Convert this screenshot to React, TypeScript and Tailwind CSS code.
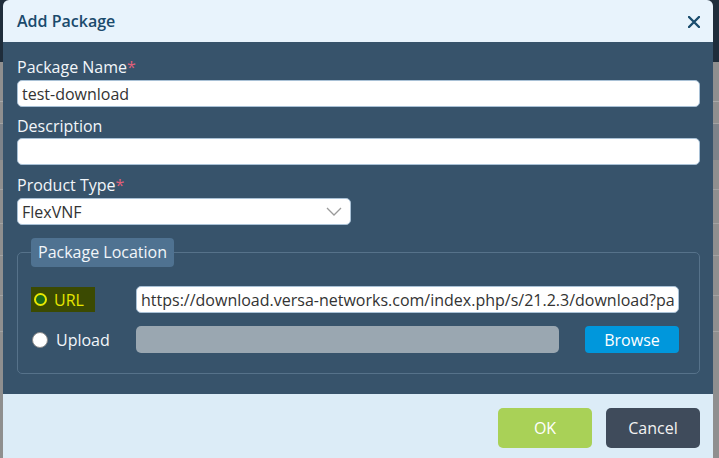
import React from "react";

const fieldBox =
  "h-[27px] w-full rounded-[5px] border border-[#a9c1d6] bg-white px-[4px] text-[16px] text-[#333] outline-none";

function Label({ text, required }: { text: string; required?: boolean }) {
  return (
    <div className="h-[20px] text-[16px] leading-[20px] text-[#f2f6fa]">
      {text}
      {required && <span className="text-[#e0607a]">*</span>}
    </div>
  );
}

function Backdrop() {
  return (
    <div className="flex h-full w-full flex-col">
      <div className="h-[62px] bg-[#1f2d3b]" />
      <div className="flex flex-1 flex-col bg-[#8f8f8f]">
        <div className="h-[40px] border-b border-[#a9a9a9]" />
        <div className="h-[22px] border-b border-[#a3a3a3]" />
        <div className="h-[36px] bg-[#7d838a]" />
        <div className="h-[30px] border-b border-[#a3a3a3]" />
        <div className="h-[34px] border-b border-[#a3a3a3]" />
        <div className="h-[32px] border-b border-[#a3a3a3]" />
        <div className="h-[40px] border-b border-[#a3a3a3]" />
        <div className="h-[36px] border-b border-[#a3a3a3]" />
      </div>
    </div>
  );
}

export default function App() {
  return (
    <div className="relative h-[458px] w-[719px] overflow-hidden font-['Open_Sans',sans-serif]">
      <Backdrop />

      <div className="absolute left-[3px] top-0 flex h-[458px] w-[710px] flex-col overflow-hidden rounded-t-[6px]">
        {/* header */}
        <div className="flex h-[42px] shrink-0 items-center justify-between bg-[#e8f3fc] pl-[14px] pr-[13px]">
          <span className="text-[16px] font-semibold text-[#1a4a6c]">Add Package</span>
          <svg width="12" height="12" viewBox="0 0 12 12" className="mt-[2px]">
            <path d="M1 1 L11 11 M11 1 L1 11" stroke="#1a4c6e" strokeWidth="2.4" strokeLinecap="round" />
          </svg>
        </div>

        {/* body */}
        <div className="flex shrink-0 flex-col bg-[#37536b] pb-[20px] pl-[14px] pr-[13px] pt-[15px]">
          <Label text="Package Name" required />
          <input readOnly value="test-download" className={`mt-[3px] ${fieldBox}`} />

          <div className="mt-[9px]">
            <Label text="Description" />
          </div>
          <input readOnly value="" className={`mt-[2px] ${fieldBox}`} />

          <div className="mt-[10px]">
            <Label text="Product Type" required />
          </div>
          <div className="mt-[3px] flex h-[27px] w-[334px] items-center justify-between rounded-[5px] border border-[#a9c1d6] bg-white pl-[4px] pr-[8px] text-[16px] text-[#333]">
            <span>FlexVNF</span>
            <svg width="16" height="9" viewBox="0 0 16 9">
              <path d="M1 1 L8 8 L15 1" fill="none" stroke="#9a9a9a" strokeWidth="1.3" />
            </svg>
          </div>

          <fieldset className="mt-[13px] rounded-[5px] border border-[#56728a] pb-[20px] pl-[13px] pr-[20px]">
            <legend className="h-[29px] rounded-[4px] bg-[#4f7291] px-[7px] text-[16px] leading-[29px] text-[#f2f6fa]">
              Package Location
            </legend>

            <div className="mt-[19px] flex h-[27px] items-center">
              <div className="w-[105px]">
                <div className="flex h-[25px] w-[64px] items-center gap-[7px] bg-[#3b4a02] pl-[3px]">
                  <span className="h-[13px] w-[13px] rounded-full border-[2px] border-[#e8e800] bg-[#1c6a1a]" />
                  <span className="text-[16px] text-[#e6e600]">URL</span>
                </div>
              </div>
              <input
                readOnly
                value="https://download.versa-networks.com/index.php/s/21.2.3/download?path=%2F&files=versa-flexvnf-20211028.bin"
                className={`${fieldBox} flex-1`}
              />
            </div>

            <div className="mt-[13px] flex h-[27px] items-center">
              <div className="flex w-[105px] items-center gap-[8px] pl-[1px]">
                <span className="h-[16px] w-[16px] rounded-full border border-[#8a8a8a] bg-white" />
                <span className="text-[16px] text-[#f2f6fa]">Upload</span>
              </div>
              <div className="h-[27px] w-[423px] rounded-[5px] bg-[#9aa7b1]" />
              <button className="ml-[26px] h-[27px] w-[94px] rounded-[4px] bg-[#0097dc] text-[16px] text-white">
                Browse
              </button>
            </div>
          </fieldset>
        </div>

        {/* footer */}
        <div className="flex flex-1 items-start justify-end gap-[14px] bg-[#dcecf7] pr-[13px] pt-[14px]">
          <button className="h-[40px] w-[94px] rounded-[5px] bg-[#a9d157] text-[16px] text-white">OK</button>
          <button className="h-[40px] w-[94px] rounded-[5px] bg-[#3f4b5b] text-[16px] text-[#f2f2f2]">Cancel</button>
        </div>
      </div>
    </div>
  );
}
